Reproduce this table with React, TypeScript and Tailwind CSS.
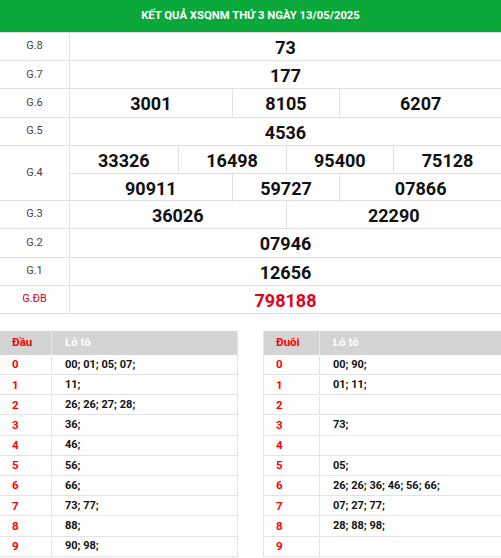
const prizes: { label: string; rows: { nums: string[]; cols: string }[]; special?: boolean }[] = [
  { label: "G.8", rows: [{ nums: ["73"], cols: "grid-cols-1" }] },
  { label: "G.7", rows: [{ nums: ["177"], cols: "grid-cols-1" }] },
  { label: "G.6", rows: [{ nums: ["3001", "8105", "6207"], cols: "grid-cols-[3fr_2fr_3fr]" }] },
  { label: "G.5", rows: [{ nums: ["4536"], cols: "grid-cols-1" }] },
  {
    label: "G.4",
    rows: [
      { nums: ["33326", "16498", "95400", "75128"], cols: "grid-cols-4" },
      { nums: ["90911", "59727", "07866"], cols: "grid-cols-[3fr_2fr_3fr]" },
    ],
  },
  { label: "G.3", rows: [{ nums: ["36026", "22290"], cols: "grid-cols-2" }] },
  { label: "G.2", rows: [{ nums: ["07946"], cols: "grid-cols-1" }] },
  { label: "G.1", rows: [{ nums: ["12656"], cols: "grid-cols-1" }] },
  { label: "G.ĐB", rows: [{ nums: ["798188"], cols: "grid-cols-1" }], special: true },
];

const dau = ["00; 01; 05; 07;", "11;", "26; 26; 27; 28;", "36;", "46;", "56;", "66;", "73; 77;", "88;", "90; 98;"];
const duoi = ["00; 90;", "01; 11;", "", "73;", "", "05;", "26; 26; 36; 46; 56; 66;", "07; 27; 77;", "28; 88; 98;", ""];

const LotoTable = ({ title, data, firstCol, className }: { title: string; data: string[]; firstCol: string; className: string }) => (
  <div className={`w-[238px] shrink-0 ${className}`}>
    <div className="flex h-[24px] bg-[#d4d4d4] text-[11.5px] font-bold">
      <div className={`${firstCol} flex shrink-0 items-center border-r border-[#e6e6e6] pl-[12px] text-[#ff0000]`}>{title}</div>
      <div className="flex min-w-0 flex-1 items-center pl-[13px] text-white">Lô tô</div>
    </div>
    {data.map((v, i) => (
      <div key={i} className="flex h-[20.2px] border-b border-[#e3e3e3] pt-[1px] text-[11px] font-bold">
        <div className={`${firstCol} flex shrink-0 items-center border-r border-[#e3e3e3] pl-[12px] text-[11.5px] text-[#ff0000]`}>{i}</div>
        <div className="flex min-w-0 flex-1 items-center whitespace-nowrap pl-[13px] text-[#111]">{v}</div>
      </div>
    ))}
  </div>
);

export default function App() {
  return (
    <div className="w-[501px] h-[558px] overflow-hidden bg-white font-['Roboto',sans-serif]">
      <div className="flex h-[32px] items-center justify-center bg-[#0aa83a] text-[11.3px] font-bold text-white">
        KẾT QUẢ XSQNM THỨ 3 NGÀY 13/05/2025
      </div>
      <div className="border-t border-[#dedede]">
        {prizes.map((p) => (
          <div key={p.label} className="flex border-b border-[#e0e0e0]">
            <div
              className={`flex w-[70px] shrink-0 items-center justify-center border-r border-[#e0e0e0] text-[11px] ${
                p.special ? "text-[#e3001b]" : "text-[#444]"
              }`}
            >
              {p.label}
            </div>
            <div className="flex-1">
              {p.rows.map((r, ri) => (
                <div key={ri} className={`grid h-[27.2px] ${r.cols} ${ri > 0 ? "border-t border-[#e0e0e0]" : ""}`}>
                  {r.nums.map((n, ni) => (
                    <div
                      key={ni}
                      className={`flex items-center justify-center pt-[1px] text-[18px] font-bold ${
                        ni > 0 ? "border-l border-[#e0e0e0]" : ""
                      } ${p.special ? "text-[#e3001b]" : "text-[#111]"}`}
                    >
                      {n}
                    </div>
                  ))}
                </div>
              ))}
            </div>
          </div>
        ))}
      </div>
      <div className="mt-[17px] flex gap-[25px]">
        <LotoTable title="Đầu" data={dau} firstCol="w-[52px]" className="border-r border-[#e3e3e3]" />
        <LotoTable title="Đuôi" data={duoi} firstCol="w-[56px]" className="border-l border-[#e3e3e3]" />
      </div>
    </div>
  );
}
